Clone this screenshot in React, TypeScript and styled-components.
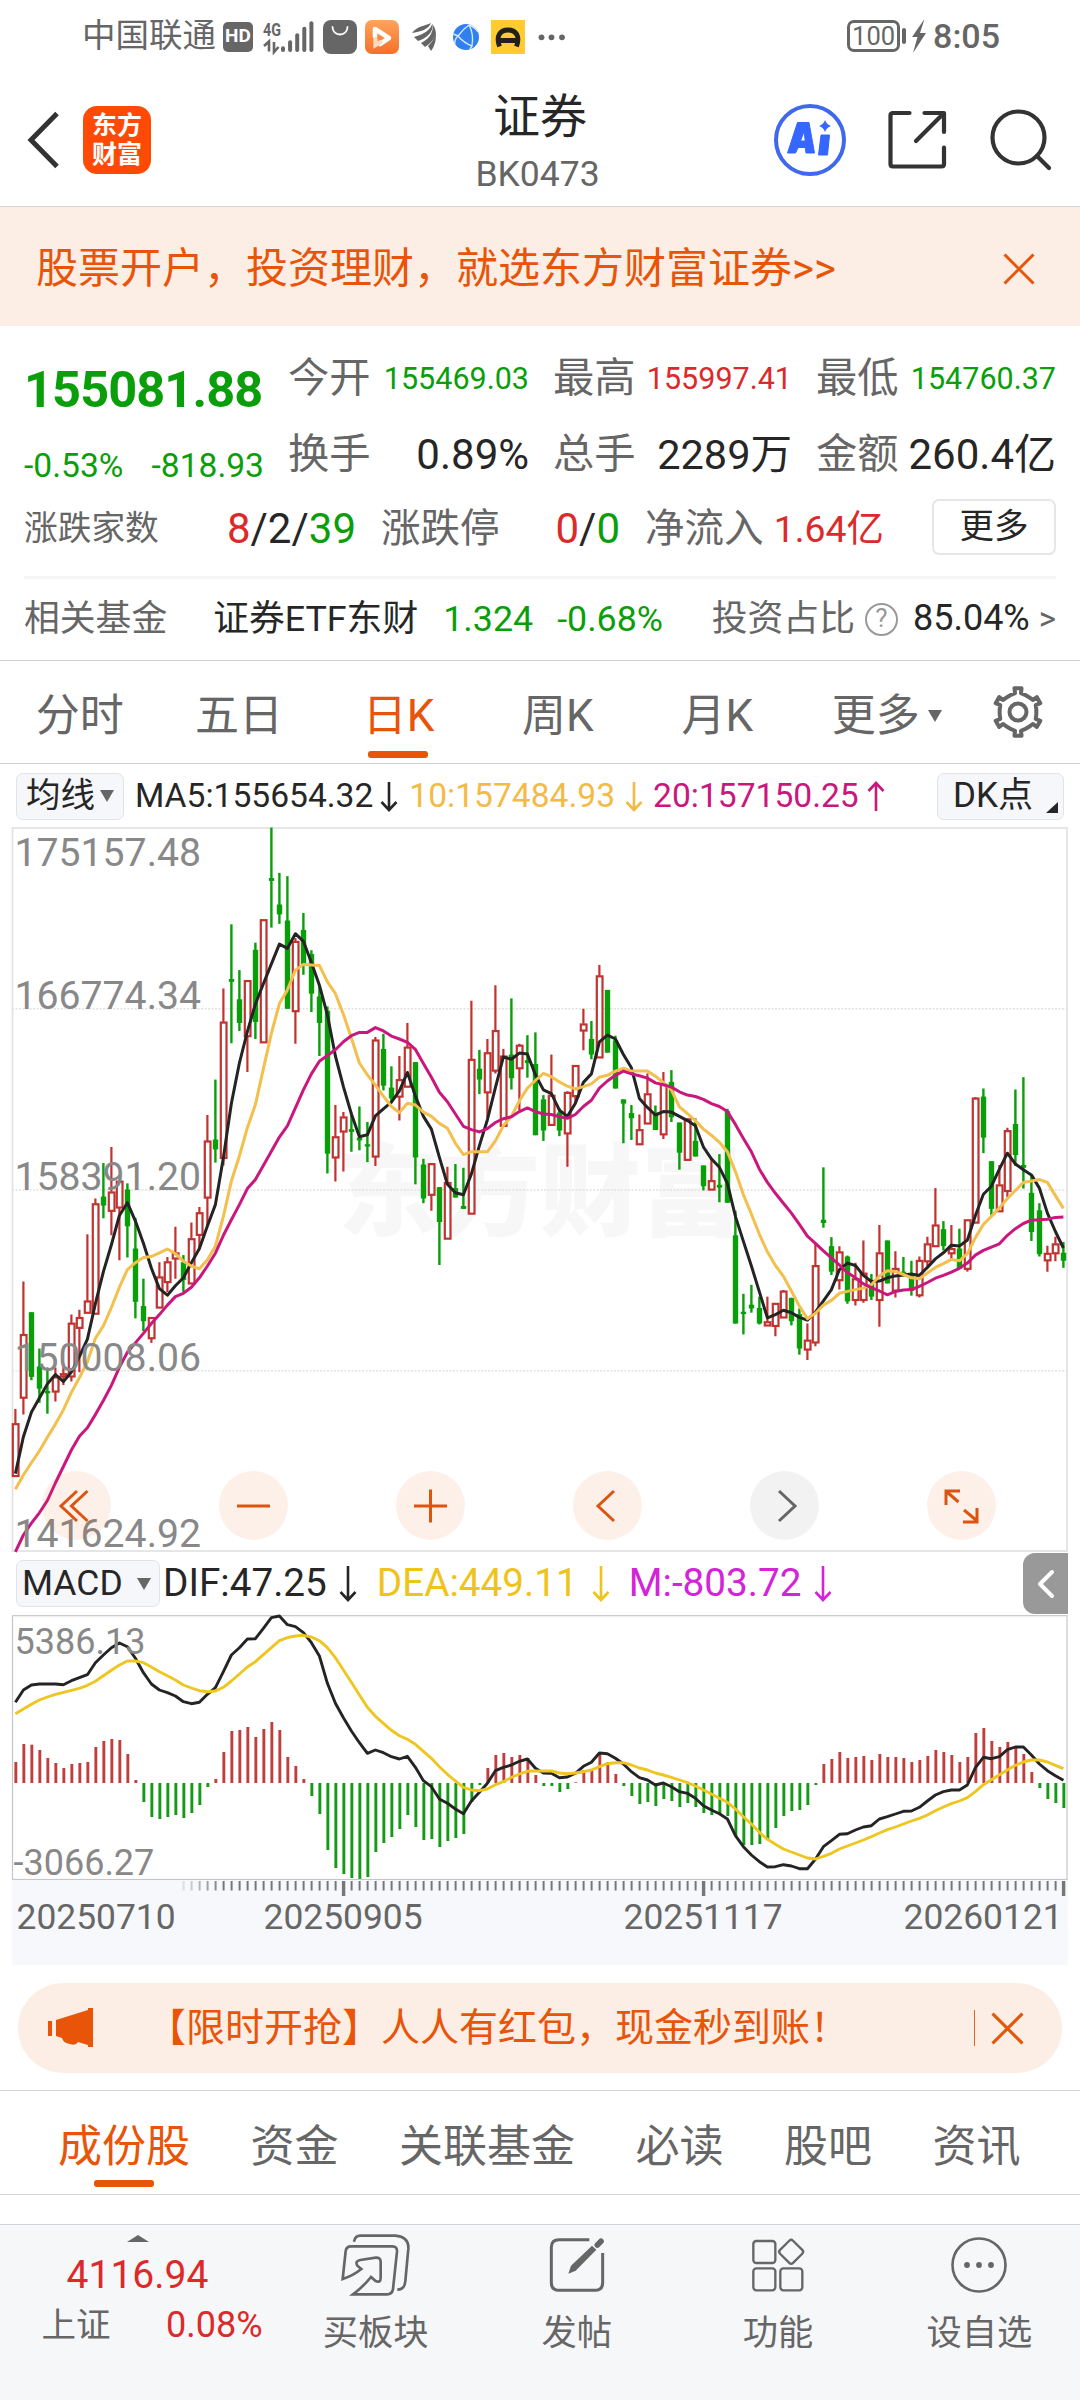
import React from 'react';
import styled, { createGlobalStyle } from 'styled-components';

const ORANGE = '#e85408';
const GREEN = '#0a9e0a';
const RED = '#dc2a2a';
const INK = '#262626';
const GREY = '#666666';

const Global = createGlobalStyle`
  * { box-sizing: border-box; }
  body { margin: 0; background: #fff; }
  svg { display: block; flex: none; overflow: visible; }
`;

const Page = styled.div`
  width: 1080px;
  height: 2400px;
  overflow: hidden;
  display: flex;
  flex-direction: column;
  background: #fff;
  font-family: Roboto, 'Noto Sans CJK SC', sans-serif;
  color: ${INK};
`;

const Text = styled.span<{ $size: number; $color?: string; $weight?: number; $ml?: number; $ls?: number }>`
  font-size: ${(p) => p.$size}px;
  line-height: 1.2;
  color: ${(p) => p.$color ?? INK};
  font-weight: ${(p) => p.$weight ?? 400};
  margin-left: ${(p) => p.$ml ?? 0}px;
  letter-spacing: ${(p) => p.$ls ?? 0}px;
  white-space: nowrap;
`;

/* ---------- status bar ---------- */
const StatusBar = styled.div`
  height: 73px;
  flex: none;
  display: flex;
  align-items: center;
  justify-content: space-between;
  padding: 0 80px 0 82px;
`;
const StatusGroup = styled.div`
  display: flex;
  align-items: center;
`;
const Battery = styled.div`
  width: 53px;
  height: 32px;
  border: 3px solid ${GREY};
  border-radius: 7px;
  display: flex;
  align-items: center;
  justify-content: center;
`;
const BatteryTip = styled.div`
  width: 4px;
  height: 16px;
  margin: 0 5px 0 2px;
  border-radius: 2px;
  background: ${GREY};
`;
const HdBadge = styled.div`
  width: 30px;
  height: 30px;
  margin: 0 6px 0 7px;
  border-radius: 5px;
  background: ${GREY};
  display: flex;
  align-items: center;
  justify-content: center;
`;

/* ---------- header ---------- */
const Header = styled.div`
  height: 134px;
  flex: none;
  display: grid;
  grid-template-columns: 300px 1fr 300px;
  border-bottom: 1px solid #d4d4d4;
`;
const HeaderLeft = styled.div`
  display: flex;
  align-items: center;
  padding-left: 25px;
`;
const Logo = styled.div`
  width: 68px;
  height: 68px;
  margin-left: 20px;
  border-radius: 14px;
  background: #ff4a05;
  display: flex;
  flex-direction: column;
  align-items: center;
  justify-content: center;
`;
const LogoLine = styled.span`
  color: #fff;
  font-size: 25px;
  line-height: 29px;
  font-weight: 700;
`;
const HeaderTitle = styled.div`
  display: flex;
  flex-direction: column;
  align-items: center;
  padding-top: 16px;
  gap: 8px;
`;
const Code = styled(Text)`
  padding-right: 5px;
`;
const HeaderRight = styled.div`
  display: flex;
  align-items: center;
  justify-content: flex-end;
  gap: 40px;
  padding-right: 27px;
`;

/* ---------- banner ---------- */
const Banner = styled.div`
  height: 119px;
  flex: none;
  display: flex;
  align-items: center;
  justify-content: space-between;
  padding: 5px 45px 0 36px;
  background: #fdeee5;
`;

/* ---------- quote ---------- */
const Quote = styled.section`
  height: 334px;
  flex: none;
  padding: 15px 24px 0;
`;
const QuoteGrid = styled.div`
  display: grid;
  grid-template-columns: 240px 241px 239px 240px;
  grid-template-rows: 76px 76px;
  column-gap: 24px;
`;
const PriceBlock = styled.div`
  grid-row: 1 / span 2;
  padding-top: 11px;
`;
const PriceLine = styled.div`
  height: 76px;
  display: flex;
  align-items: center;
`;
const ChangeLine = styled.div`
  height: 64px;
  padding-top: 12px;
  display: flex;
  align-items: center;
  justify-content: space-between;
`;
const Pair = styled.div<{ $w?: number }>`
  display: flex;
  align-items: center;
  justify-content: space-between;
  width: ${(p) => (p.$w ? `${p.$w}px` : 'auto')};
`;
const BreadthRow = styled.div`
  height: 72px;
  display: flex;
  align-items: center;
  gap: 25px;
`;
const MoreButton = styled.div`
  width: 124px;
  height: 56px;
  margin: -4px 0 0 auto;
  border: 2px solid #e6e6e6;
  border-radius: 7px;
  display: flex;
  align-items: center;
  justify-content: center;
`;
const FundRow = styled.div`
  height: 83px;
  margin-top: 11px;
  border-top: 3px solid #f5f5f5;
  display: flex;
  align-items: center;
`;
const Push = styled.div<{ $mr?: number }>`
  margin-left: auto;
  margin-right: ${(p) => p.$mr ?? 0}px;
  display: flex;
  align-items: center;
`;
const Help = styled.div`
  width: 33px;
  height: 33px;
  margin: 0 15px 0 10px;
  border: 2.5px solid #999;
  border-radius: 50%;
  display: flex;
  align-items: center;
  justify-content: center;
`;

/* ---------- period tabs ---------- */
const PeriodTabs = styled.div`
  height: 104px;
  flex: none;
  display: grid;
  grid-template-columns: repeat(6, 159.4px) 1fr;
  border-top: 1px solid #d0d0d0;
  border-bottom: 1px solid #d0d0d0;
`;
const PeriodTab = styled.div`
  display: flex;
  flex-direction: column;
  align-items: center;
  padding-top: 29px;
`;
const TabMark = styled.div<{ $on: boolean; $gap: number }>`
  width: 60px;
  height: 7px;
  margin-top: ${(p) => p.$gap}px;
  border-radius: 3px;
  background: ${(p) => (p.$on ? ORANGE : 'transparent')};
`;
const WithCaret = styled.div`
  display: flex;
  align-items: center;
  margin-left: 20px;
`;
const Caret = styled.div<{ $ml?: number }>`
  margin-left: ${(p) => p.$ml ?? 8}px;
  border-left: 7.5px solid transparent;
  border-right: 7.5px solid transparent;
  border-top: 12px solid ${GREY};
`;
const GearCell = styled.div`
  display: flex;
  align-items: center;
  padding-left: 35px;
`;

/* ---------- indicator rows ---------- */
const IndicatorRow = styled.div<{ $h: number; $pt?: number }>`
  height: ${(p) => p.$h}px;
  padding-top: ${(p) => p.$pt ?? 0}px;
  flex: none;
  display: flex;
  align-items: center;
  padding-left: 16px;
`;
const Chip = styled.div<{ $w: number; $pl: number }>`
  position: relative;
  width: ${(p) => p.$w}px;
  height: 47px;
  padding-left: ${(p) => p.$pl}px;
  border: 1.5px solid #e1e3e6;
  border-radius: 7px;
  background: #f6f7fa;
  display: flex;
  align-items: center;
`;
const Corner = styled.div`
  position: absolute;
  right: 5px;
  bottom: 6px;
  border-left: 12px solid transparent;
  border-bottom: 11px solid ${INK};
`;
const Drawer = styled.div`
  width: 45px;
  height: 61px;
  margin-left: auto;
  margin-right: 12px;
  border-radius: 12px 0 0 12px;
  background: #999;
  display: flex;
  align-items: center;
  justify-content: center;
`;

/* ---------- charts ---------- */
const ChartArea = styled.div`
  position: relative;
  height: 725px;
  flex: none;
`;
const ChartTools = styled.div`
  position: absolute;
  left: 42px;
  top: 644px;
  display: flex;
  gap: 108px;
`;
const Tool = styled.div<{ $muted?: boolean }>`
  width: 69px;
  height: 69px;
  border-radius: 50%;
  background: ${(p) => (p.$muted ? 'rgba(0,0,0,0.05)' : 'rgba(234,85,4,0.085)')};
  display: flex;
  align-items: center;
  justify-content: center;
`;
const MacdArea = styled.div`
  height: 265px;
  flex: none;
`;
const AxisArea = styled.div`
  height: 85px;
  margin: 0 12px;
  flex: none;
  background: #f7f8fb;
`;

/* ---------- promo ---------- */
const Promo = styled.div`
  height: 90px;
  margin: 18px 18px 17px;
  flex: none;
  border-radius: 45px;
  background: #fdeee5;
  display: flex;
  align-items: center;
  padding: 0 38px 0 30px;
`;
const PromoLine = styled.div`
  width: 1px;
  height: 36px;
  margin-left: auto;
  margin-right: 16px;
  background: #d9672b;
`;

/* ---------- content tabs ---------- */
const ContentTabs = styled.div`
  height: 105px;
  flex: none;
  display: flex;
  gap: 60.5px;
  padding-left: 58px;
  border-top: 1px solid #d4d4d4;
  border-bottom: 1px solid #d4d4d4;
`;
const ContentTab = styled.div`
  display: flex;
  flex-direction: column;
  align-items: center;
  padding-top: 30px;
`;

/* ---------- bottom bar ---------- */
const BottomBar = styled.div`
  height: 176px;
  margin-top: 29px;
  flex: none;
  display: grid;
  grid-template-columns: 275px repeat(4, 201.25px);
  border-top: 1px solid #cfd2d8;
  background: #f6f7f9;
`;
const IndexBox = styled.div`
  display: flex;
  flex-direction: column;
  align-items: center;
  padding-top: 10px;
`;
const UpCaret = styled.div`
  margin-bottom: 10px;
  border-left: 11px solid transparent;
  border-right: 11px solid transparent;
  border-bottom: 7px solid ${GREY};
`;
const IndexLine = styled.div`
  width: 221px;
  margin: 5px 0 0 29px;
  display: flex;
  align-items: center;
  justify-content: space-between;
`;
const NavItem = styled.div`
  display: flex;
  flex-direction: column;
  align-items: center;
`;
const NavIcon = styled.div`
  height: 80px;
  margin-bottom: 7px;
  display: flex;
  align-items: center;
`;

/* ---------- data ---------- */
type Candle = [0 | 1, number, number, number, number];

/* [rising, high, body top, body bottom, low] in axis units measured down from the top */
const CANDLES: Candle[] = [
  [1,1248,1279,1391,1391],[1,978,1090,1225,1260],[0,1043,1043,1180,1187],[0,1120,1158,1205,1235],[0,1160,1210,1215,1258],
  [1,1160,1180,1212,1232],[1,1155,1173,1180,1197],[1,1048,1066,1180,1190],[1,1038,1054,1077,1170],[1,878,1019,1045,1045],
  [1,802,813,1047,1047],[0,727,798,817,844],[1,693,788,829,880],[1,762,765,822,933],[0,770,783,861,927],
  [0,843,908,1021,1056],[0,972,1030,1062,1083],[1,1054,1054,1099,1108],[1,937,968,1034,1034],[1,926,936,980,1000],
  [1,862,917,930,972],[0,922,937,975,1000],[1,853,887,983,983],[1,820,832,880,910],[1,625,680,801,860],
  [0,550,677,698,726],[1,357,428,717,732],[0,221,337,343,473],[0,318,380,430,447],[1,340,340,459,534],
  [0,260,275,428,464],[1,211,211,472,472],[0,16,123,129,228],[0,112,179,200,220],[0,119,213,400,400],
  [1,250,257,406,474],[0,197,233,305,328],[0,276,284,368,407],[0,350,374,430,500],[0,395,404,707,749],
  [1,604,671,716,766],[1,619,629,661,745],[0,620,655,661,703],[0,607,673,679,700],[0,640,687,692,725],
  [1,460,466,714,733],[0,453,485,563,573],[0,522,567,590,600],[1,500,550,587,637],[1,430,481,566,566],
  [0,513,513,715,772],[0,718,730,802,812],[1,728,728,795,828],[0,778,778,852,943],[1,735,768,888,888],
  [0,729,780,800,800],[0,737,818,824,824],[1,383,507,835,835],[0,487,527,550,581],[1,464,493,578,630],
  [1,350,446,532,537],[1,485,500,649,649],[0,378,497,547,571],[1,474,477,527,615],[0,456,509,515,546],
  [0,450,517,668,668],[0,583,592,658,680],[1,497,583,647,647],[0,610,620,658,670],[1,575,577,665,735],
  [1,520,520,586,600],[1,400,432,447,488],[0,426,464,497,507],[1,307,330,504,504],[0,360,360,493,493],
  [0,457,467,569,569],[0,592,592,601,685],[0,604,621,632,678],[1,624,656,688,688],[1,537,580,644,644],
  [0,605,620,657,657],[1,534,560,667,676],[0,530,555,630,640],[0,641,641,705,741],[1,633,633,721,721],
  [0,632,680,713,713],[0,732,732,776,785],[1,717,764,784,784],[0,708,773,779,810],[0,612,617,811,811],
  [0,828,880,1067,1067],[0,1004,1042,1047,1090],[0,985,1027,1035,1044],[0,1010,1034,1067,1069],[1,1010,1063,1072,1072],
  [1,1024,1024,1073,1094],[1,996,998,1055,1055],[0,1012,1013,1062,1071],[0,1035,1047,1120,1133],[1,1067,1102,1123,1144],
  [1,897,944,1108,1115],[0,736,847,854,864],[0,884,903,957,964],[1,903,915,976,995],[0,923,925,1020,1025],
  [1,938,972,1018,1029],[1,891,960,1018,1023],[0,962,983,1010,1017],[1,858,917,1018,1074],[0,891,891,982,982],
  [1,914,950,998,1012],[0,926,957,962,967],[0,934,965,998,1008],[1,925,933,1008,1012],[1,883,898,936,945],
  [1,780,858,904,904],[0,850,867,903,912],[1,858,908,919,930],[0,866,908,950,950],[1,847,847,952,957],
  [1,587,589,854,854],[0,569,586,673,706],[0,723,723,824,840],[1,731,773,830,830],[1,652,658,787,800],
  [0,571,644,710,733],[0,545,731,737,781],[0,752,790,873,892],[0,812,827,920,925],[1,902,918,934,957],
  [1,883,898,919,935],[0,894,917,934,949],
];

const MA5 = [1385,1307,1255,1225,1195,1175,1190,1170,1137,1100,1025,957,900,838,811,850,897,950,993,1007,987,970,938,908,860,815,715,600,515,448,390,347,305,263,272,241,257,302,350,413,500,565,623,671,667,627,612,598,574,535,585,628,655,715,772,790,794,750,690,635,567,502,507,494,496,540,572,580,615,628,600,556,538,470,456,464,497,525,590,609,625,618,619,628,637,648,693,718,736,770,840,893,945,1000,1055,1048,1039,1044,1054,1060,1043,1019,995,953,939,944,965,978,977,970,966,964,962,965,948,930,917,901,903,890,838,793,776,740,706,729,741,752,780,833,872,907];
const MA10 = [1418,1388,1362,1337,1308,1280,1250,1213,1182,1148,1098,1072,1033,990,953,938,927,925,917,909,919,935,945,951,932,903,840,765,712,652,603,527,452,389,360,318,306,307,308,343,368,412,462,515,540,562,585,607,620,600,604,619,628,643,653,685,709,703,703,703,680,648,628,595,568,552,537,544,555,564,570,565,559,545,541,532,526,532,532,532,543,556,572,608,622,637,655,668,683,703,745,794,835,878,915,944,967,998,1030,1057,1045,1028,1018,1003,999,995,992,985,966,955,957,963,970,972,960,948,940,931,934,919,885,857,840,822,802,785,768,765,762,768,796,823];
const MA20 = [1551,1515,1490,1468,1442,1405,1370,1335,1306,1288,1260,1230,1198,1160,1128,1108,1088,1067,1048,1028,1010,1003,990,970,945,918,880,847,815,781,762,732,702,672,648,610,572,538,511,499,487,470,457,450,450,440,447,458,464,471,486,516,545,577,597,623,649,656,661,654,641,633,629,618,610,618,623,624,629,632,624,607,594,568,553,541,532,538,542,547,557,561,566,576,583,586,592,601,607,618,645,675,703,740,768,791,812,833,857,882,897,913,928,943,959,970,983,991,998,1006,999,996,995,988,980,971,965,958,950,939,922,912,905,898,880,866,855,848,847,846,842,841];

const BARS = [666,612,614,630,654,669,684,672,669,666,621,603,597,600,642,720,786,831,837,831,825,834,819,795,741,717,636,573,570,561,591,567,546,570,651,678,717,768,822,930,984,1002,1014,1017,1011,936,909,891,867,825,861,900,897,921,903,894,882,786,735,684,645,639,651,645,654,705,738,738,756,747,727,690,687,642,666,702,738,768,792,786,798,777,783,801,789,801,819,825,822,828,888,915,915,912,897,864,828,813,810,795,735,672,657,636,654,651,648,660,642,651,651,654,666,660,648,630,636,645,666,651,579,564,603,621,606,618,642,696,744,777,789,804];
const DIF = [487,450,435,432,432,432,434,422,413,404,368,345,323,309,320,355,398,432,450,458,468,485,491,487,463,443,395,345,323,297,296,265,233,228,254,260,278,308,348,430,490,533,573,608,640,630,638,650,657,649,682,722,740,777,790,807,821,783,757,730,692,682,675,664,657,685,699,700,713,711,700,679,667,639,641,655,672,695,713,720,735,729,740,755,760,775,797,810,821,837,887,920,945,965,981,980,974,978,986,986,958,920,902,883,881,870,861,857,837,830,822,814,813,802,783,765,755,750,750,735,683,652,656,650,629,621,621,645,672,692,707,721];
const DEA = [521,507,493,480,471,463,457,451,445,436,424,407,391,375,363,363,368,381,395,407,420,435,444,452,455,453,442,423,402,381,365,344,323,302,293,288,286,291,302,323,353,390,427,465,502,529,550,571,587,598,613,634,655,680,703,723,742,750,752,747,734,725,712,702,694,693,693,693,699,701,699,695,690,680,671,668,668,675,684,690,699,705,712,720,728,738,750,762,775,787,807,830,852,877,898,913,927,936,945,954,957,949,940,927,918,909,900,890,879,869,861,852,843,835,825,812,801,791,783,773,755,734,719,704,690,676,666,660,660,666,676,686];

const slotX = (i: number) => 15.4 + i * 8;
const priceY = (v: number) => v / 2.119 - 7;
const macdY = (v: number) => v / 3 - 75;
const line = (values: number[], y: (v: number) => number) =>
  values.map((v, i) => `${slotX(i).toFixed(1)},${y(v).toFixed(1)}`).join(' ');

const PRICE_LABELS: [string, number][] = [
  ['175157.48', 38.5], ['166774.34', 182], ['158391.20', 362.5], ['150008.06', 543.7], ['141624.92', 720],
];

const PriceChart = () => (
  <svg width="1080" height="725" viewBox="0 0 1080 725">
    <text x="338" y="401" fontSize="101" fontWeight="900" fill="#f7f7f7" fontFamily="'Noto Sans CJK SC', sans-serif">东方财富</text>
    {[181.8, 363, 543.8].map((y) => (
      <line key={y} x1="12" x2="1067" y1={y} y2={y} stroke="#e2e2e2" strokeWidth="1.5" strokeDasharray="2 1.5" />
    ))}
    <rect x="12.5" y="1" width="1054.5" height="723" fill="none" stroke="#e2e2e2" strokeWidth="1.7" />
    {CANDLES.map(([up, hi, top, bottom, lo], i) => {
      const x = slotX(i);
      const t = priceY(top);
      const b = priceY(bottom);
      return up ? (
        <g key={i} fill="none" stroke="#c03331" strokeWidth="2.2">
          <path d={`M${x} ${priceY(hi)}V${t}M${x} ${b}V${priceY(lo)}`} />
          <rect x={x - 2.6} y={t + 0.6} width="5.7" height={Math.max(b - t - 1, 2)} fill="#fff" />
        </g>
      ) : (
        <g key={i} fill="#0a9e0a">
          <rect x={x - 1.2} y={priceY(hi)} width="2.4" height={priceY(lo) - priceY(hi)} />
          <rect x={x - 2.6} y={t} width="5.4" height={b - t} />
        </g>
      );
    })}
    <g fill="none" strokeWidth="3" strokeLinejoin="round">
      <polyline points={line(MA5, priceY)} stroke="#242424" />
      <polyline points={line(MA10, priceY)} stroke="#f3bf4d" />
      <polyline points={line(MA20, priceY)} stroke="#c9177e" />
    </g>
    <g fontSize="39.2" fill="#888">
      {PRICE_LABELS.map(([label, y]) => <text key={label} x="14.5" y={y}>{label}</text>)}
    </g>
  </svg>
);

const MacdChart = () => (
  <svg width="1080" height="265" viewBox="0 0 1080 265">
    {BARS.map((v, i) => {
      const y = macdY(v);
      return (
        <rect key={i} x={slotX(i) - 1} width="2.9" y={Math.min(y, 168)} height={Math.abs(168 - y)} fill={v < 729 ? '#c03f3d' : '#149a14'} />
      );
    })}
    <rect x="12.5" y="0.7" width="1054.5" height="263.800" fill="none" stroke="#c6c6c6" strokeWidth="1.2" />
    <g fill="none" strokeWidth="2.9" strokeLinejoin="round">
      <polyline points={line(DIF, macdY)} stroke="#242424" />
      <polyline points={line(DEA, macdY)} stroke="#efc51f" />
    </g>
    <g fontSize="36" fill="#888">
      <text x="14.500" y="39">5386.13</text>
      <text x="13.500" y="259.500">-3066.27</text>
    </g>
  </svg>
);

const TimeAxis = () => (
  <svg width="1056" height="85" viewBox="12 0 1056 85">
    {BARS.map((_, i) => {
      if (i < 21) return null;
      const major = (i - 41) % 45 === 0;
      return (
        <rect
          key={i}
          x={slotX(i) - (major ? 1.5 : 0.8)}
          y="1"
          width={major ? 3.4 : 2}
          height={major ? 15 : 9.5}
          fill="#777"
          opacity={Math.min(1, 0.2 + (i - 21) * 0.16)}
        />
      );
    })}
    <g fontSize="35.4" fill={GREY}>
      <text x="16.5" y="49">20250710</text>
      <text x="263.500" y="49">20250905</text>
      <text x="623.500" y="49">20251117</text>
      <text x="903.500" y="49">20260121</text>
    </g>
  </svg>
);

/* ---------- icons ---------- */
const ArrowSvg = styled.svg<{ $ml: number; $mr: number }>`
  margin-left: ${(p) => p.$ml}px;
  margin-right: ${(p) => p.$mr}px;
`;

const Arrow = ({ color, h, up, ml, mr }: { color: string; h: number; up?: boolean; ml: number; mr: number }) => (
  <ArrowSvg $ml={ml} $mr={mr} width="18" height={h} viewBox={`0 0 18 ${h}`} fill="none" stroke={color} strokeWidth="2.600">
    <path d={up ? `M9 ${h - 1}V3M1.5 10L9 2L16.5 10` : `M9 1V${h - 3}M1.5 ${h - 10}L9 ${h - 2}L16.5 ${h - 10}`} />
  </ArrowSvg>
);

const Cross = ({ size, color }: { size: number; color: string }) => (
  <svg width={size} height={size} viewBox="0 0 32 32" fill="none" stroke={color} strokeWidth="3">
    <path d="M1.5 1.5L30.5 30.5M30.5 1.5L1.5 30.5" />
  </svg>
);

const StatusIcons = () => (
  <svg width="312" height="40" viewBox="258 16 312 40">
    <text x="262" y="34.500" fontSize="19" fontWeight="700" fill={GREY} textLength="18" lengthAdjust="spacingAndGlyphs">4G</text>
    <path d="M263 45l5-4.5v10M273 41v10l4.5-5" fill="none" stroke={GREY} strokeWidth="2.6" />
    {[45.3, 39.3, 32.3, 25.7, 20.3].map((y, i) => (
      <rect key={y} x={280 + i * 7.1} y={y} width="4" height={51 - y} rx="2" fill={GREY} />
    ))}
    <rect x="322" y="19" width="34" height="34" rx="8" fill={GREY} />
    <path d="M331.500 26a7.500 7.500 0 0 0 15 0" fill="none" stroke="#fff" strokeWidth="1.8" strokeLinecap="round" />
    <defs>
      <linearGradient id="play" x1="0" y1="0" x2="0" y2="1">
        <stop offset="0" stopColor="#ffa45c" />
        <stop offset="1" stopColor="#f5702a" />
      </linearGradient>
    </defs>
    <rect x="364" y="19" width="34" height="34" rx="7" fill="url(#play)" />
    <path d="M374 35.500V28l14 9-9 6" fill="none" stroke="#fff" strokeWidth="4.600" strokeLinejoin="round" strokeLinecap="round" />
    <path d="M374.500 38v6l5-3" fill="none" stroke="#ffd9c0" strokeWidth="4.200" strokeLinecap="round" />
    <g fill={GREY}>
      <path d="M411 32C416 25 424 25 430 22C428 28 419 31 411 32Z" />
      <path d="M413 36C424 33 429 29 431.500 22.500C433 32 424 38 417 40Z" />
      <path d="M420 42C430 37 432 30 432 24C438 32 433 40 424 46Z" />
      <path d="M427 45C433 40 434 34 434.300 29C436 37 434 45 430 50Z" />
    </g>
    <circle cx="465" cy="36" r="13" fill="#3180f0" />
    <g fill="none" stroke="#d6e7ff" strokeWidth="1.400">
      <path d="M468 24Q462 28 457 35Q463 42 471 45Q473 33 468 24M457 35L452.500 33M457 35Q453 39 454 43M471 45L469 48M468 24Q474 26 477 31" />
    </g>
    <rect x="490" y="19" width="34" height="34" fill="#ffcb30" />
    <path d="M498.500 45.500c-4-11 1-16.500 8.500-16.500s12.500 5.500 8.500 16.500M499 39.500h16" fill="none" stroke="#221f1c" strokeWidth="4.800" />
    {[540.5, 550.5, 561].map((x) => <circle key={x} cx={x} cy="36.300" r="2.900" fill={GREY} />)}
  </svg>
);

const gearPath = () => {
  const pts: string[] = [];
  for (let k = 0; k < 6; k += 1) {
    const base = k * 60 - 90;
    ([[-22, 18.5], [-9, 19], [-8.5, 24], [8.500, 24], [9, 19], [22, 18.5]] as [number, number][]).forEach(([a, r]) => {
      const t = ((base + a) * Math.PI) / 180;
      pts.push(`${(27 + r * Math.cos(t)).toFixed(2)} ${(27 + r * Math.sin(t)).toFixed(2)}`);
    });
  }
  return `M${pts.join('L')}Z`;
};

const Gear = () => (
  <svg width="54" height="54" viewBox="0 0 54 54" fill="none" stroke={GREY} strokeWidth="4" strokeLinejoin="round">
    <path d={gearPath()} />
    <circle cx="27" cy="27" r="8.500" />
  </svg>
);

const AiIcon = () => (
  <svg width="74" height="74" viewBox="0 0 74 74">
    <circle cx="37" cy="37" r="34" fill="none" stroke="#3f68ec" strokeWidth="4" />
    <path d="M24.500 19.500h11.500l5.500 30.500h-8.500l-.8-5.500h-7l-2.700 5.500h-8Z M31 28.500L27.500 38h4.800Z" fill="#3566ff" fillRule="evenodd" stroke="#3566ff" strokeWidth="1" strokeLinejoin="round" />
    <path d="M48 32h8.500l-2 20h-9Z" fill="#3566ff" stroke="#3566ff" strokeWidth="1" strokeLinejoin="round" />
    <path d="M52 17Q53.500 21.500 58 23Q53.500 24.500 52 29Q50.500 24.500 46 23Q50.500 21.500 52 17Z" fill="#3566ff" />
  </svg>
);

const ShareIcon = () => (
  <svg width="62" height="62" viewBox="0 0 62 62" fill="none" stroke="#333" strokeWidth="4.200" strokeLinecap="round" strokeLinejoin="round">
    <path d="M22.500 4H6Q3.500 4 3.500 6.500V55Q3.500 57.500 6 57.500H54.500Q57 57.500 57 55V38.500M37.500 4H57V23M56 5L29 32" />
  </svg>
);

const SearchIcon = () => (
  <svg width="64" height="64" viewBox="0 0 64 64" fill="none" stroke="#333" strokeWidth="4.200" strokeLinecap="round">
    <circle cx="29.500" cy="29.500" r="26" />
    <path d="M48 48L60 60" />
  </svg>
);

const Megaphone = () => (
  <svg width="46" height="40" viewBox="0 0 46 40" fill={ORANGE}>
    <path d="M0 13h4v15H0ZM8 12L40 2V0h5v39h-5V37L30 34q-2 4-8 2-7-1-8-6L8 28Z" />
  </svg>
);

const BuyIcon = () => (
  <svg width="75" height="66.700" viewBox="83 65 225 200" fill="none" stroke={GREY} strokeWidth="8" strokeLinejoin="round">
    <path d="M131 94Q134 76 150 76H255Q296 80 294 115L285 212Q283 238 261 238" />
    <path strokeLinejoin="miter" d="M97 206L106 122Q108 108 122 108H246Q261 108 260 124L248 236Q246 252 230 252H128Q160 228 182 200L196 212Q211 219 211 202V155Q211 141 196 142L150 149Q133 152 141 166L153 176Q130 195 97 206Z" />
  </svg>
);

const PostIcon = () => (
  <svg width="56" height="56" viewBox="717 78 168 168" fill="none" stroke={GREY} strokeWidth="9">
    <path d="M838 86H747Q724 86 724 109V215Q724 238 747 238H855Q878 238 878 215V126" />
    <path d="M775 188L783 164L846 104L859 116L797 179Z" fill={GREY} stroke="none" />
    <path d="M862 102L873 91" strokeWidth="17" strokeLinecap="round" />
  </svg>
);

const GridIcon = () => (
  <svg width="54" height="54" viewBox="1324 80 162 162" fill="none" stroke={GREY} strokeWidth="7">
    <rect x="1331" y="89" width="66" height="66" rx="9" />
    <rect x="1331" y="171" width="66" height="66" rx="9" />
    <rect x="1412" y="171" width="66" height="66" rx="9" />
    <rect x="1417" y="94" width="55" height="55" rx="8" transform="rotate(45 1444.500 121.500)" />
  </svg>
);

const DotsIcon = () => (
  <svg width="58" height="58" viewBox="0 0 58 58">
    <circle cx="29" cy="29" r="26.500" fill="none" stroke={GREY} strokeWidth="2.600" />
    {[17, 29, 41].map((x) => <circle key={x} cx={x} cy="29" r="2.900" fill={GREY} />)}
  </svg>
);

/* ---------- page ---------- */
const STATS: [string, string, string, number][] = [
  ['今开', '155469.03', GREEN, 30.5],
  ['最高', '155997.41', RED, 30.5],
  ['最低', '154760.37', GREEN, 30.5],
  ['换手', '0.89%', INK, 42],
  ['总手', '2289万', INK, 41.5],
  ['金额', '260.4亿', INK, 42],
];
const PERIODS = ['分时', '五日', '日K', '周K', '月K'];
const SECTIONS = ['成份股', '资金', '关联基金', '必读', '股吧', '资讯'];
const NAV: [string, React.ReactNode][] = [
  ['买板块', <BuyIcon />],
  ['发帖', <PostIcon />],
  ['功能', <GridIcon />],
  ['设自选', <DotsIcon />],
];
const TOOLS: { d: string; muted?: boolean }[] = [
  { d: 'M19 3L3 18L19 33M29.500 3L13.500 18L29.500 33' },
  { d: 'M2 18H35' },
  { d: 'M2 18H35M18.500 1.500V34.500' },
  { d: 'M25 3L9 18L25 33' },
  { d: 'M13 3L29 18L13 33', muted: true },
  { d: 'M17 3H3V17M4 4L15.500 14M21 22L33 32M34 20V34H20' },
];

export default function App() {
  return (
    <Page>
      <Global />
      <StatusBar>
        <StatusGroup>
          <Text $size={33.5} $color={GREY}>中国联通</Text>
          <HdBadge><Text $size={19} $color="#fff" $weight={700}>HD</Text></HdBadge>
          <StatusIcons />
        </StatusGroup>
        <StatusGroup>
          <Battery><Text $size={25.5} $color={GREY}>100</Text></Battery>
          <BatteryTip />
          <svg width="16" height="36" viewBox="0 0 16 36" fill={GREY}>
            <path d="M13.500 1L1 19H6.500L2 35L15 15H9Z" />
          </svg>
          <Text $size={34} $color={GREY} $weight={500} $ml={6}>8:05</Text>
        </StatusGroup>
      </StatusBar>

      <Header>
        <HeaderLeft>
          <svg width="38" height="58" viewBox="0 0 38 58" fill="none" stroke="#333" strokeWidth="5">
            <path d="M32 2.500L6 29L32 55.500" />
          </svg>
          <Logo><LogoLine>东方</LogoLine><LogoLine>财富</LogoLine></Logo>
        </HeaderLeft>
        <HeaderTitle>
          <Text $size={47}>证券</Text>
          <Code $size={35.5} $color={GREY}>BK0473</Code>
        </HeaderTitle>
        <HeaderRight>
          <AiIcon />
          <ShareIcon />
          <SearchIcon />
        </HeaderRight>
      </Header>

      <Banner>
        <Text $size={42} $color={ORANGE}>股票开户，投资理财，就选东方财富证券&gt;&gt;</Text>
        <Cross size={32} color={ORANGE} />
      </Banner>

      <Quote>
        <QuoteGrid>
          <PriceBlock>
            <PriceLine><Text $size={50.5} $color={GREEN} $weight={700} $ls={-0.9}>155081.88</Text></PriceLine>
            <ChangeLine>
              <Text $size={33.6} $color={GREEN}>-0.53%</Text>
              <Text $size={33.6} $color={GREEN}>-818.93</Text>
            </ChangeLine>
          </PriceBlock>
          {STATS.map(([label, value, color, size]) => (
            <Pair key={label}>
              <Text $size={41.3} $color={GREY}>{label}</Text>
              <Text $size={size} $color={color}>{value}</Text>
            </Pair>
          ))}
        </QuoteGrid>
        <BreadthRow>
          <Pair $w={332}>
            <Text $size={33.7} $color={GREY}>涨跌家数</Text>
            <Text $size={42}>
              <Text $size={42} $color={RED}>8</Text>/2/<Text $size={42} $color={GREEN}>39</Text>
            </Text>
          </Pair>
          <Pair $w={239}>
            <Text $size={39.5} $color={GREY}>涨跌停</Text>
            <Text $size={42}>
              <Text $size={42} $color={RED}>0</Text>/<Text $size={42} $color={GREEN}>0</Text>
            </Text>
          </Pair>
          <Pair $w={239}>
            <Text $size={39.5} $color={GREY}>净流入</Text>
            <Text $size={37.4} $color={RED}>1.64亿</Text>
          </Pair>
          <MoreButton><Text $size={34.5}>更多</Text></MoreButton>
        </BreadthRow>
        <FundRow>
          <Text $size={35.8} $color={GREY}>相关基金</Text>
          <Text $size={35.8} $ml={46}>证券ETF东财</Text>
          <Text $size={35.8} $color={GREEN} $ml={25}>1.324</Text>
          <Text $size={35.8} $color={GREEN} $ml={24}>-0.68%</Text>
          <Push>
            <Text $size={35.8} $color={GREY}>投资占比</Text>
            <Help><Text $size={26} $color="#999">?</Text></Help>
            <Text $size={36}>85.04%</Text>
            <Text $size={33} $color={GREY} $ml={9}>&gt;</Text>
          </Push>
        </FundRow>
      </Quote>

      <PeriodTabs>
        {PERIODS.map((name, i) => (
          <PeriodTab key={name}>
            <Text $size={44} $color={i === 2 ? ORANGE : GREY}>{name}</Text>
            <TabMark $on={i === 2} $gap={8} />
          </PeriodTab>
        ))}
        <PeriodTab>
          <WithCaret><Text $size={44} $color={GREY}>更多</Text><Caret /></WithCaret>
        </PeriodTab>
        <GearCell><Gear /></GearCell>
      </PeriodTabs>

      <IndicatorRow $h={63} $pt={1}>
        <Chip $w={108} $pl={9}><Text $size={34.5}>均线</Text><Caret $ml={5} /></Chip>
        <Text $size={33.6} $ml={11}>MA5:155654.32</Text>
        <Arrow color={INK} h={31} ml={7} mr={11} />
        <Text $size={33.6} $color="#f3bb45">10:157484.93</Text>
        <Arrow color="#f3bb45" h={31} ml={10} mr={10} />
        <Text $size={33.6} $color="#c9177e">20:157150.25</Text>
        <Arrow color="#c9177e" h={31} up ml={8} mr={0} />
        <Push $mr={16}>
          <Chip $w={127} $pl={15}><Text $size={35}>DK点</Text><Corner /></Chip>
        </Push>
      </IndicatorRow>

      <ChartArea>
        <PriceChart />
        <ChartTools>
          {TOOLS.map(({ d, muted }) => (
            <Tool key={d} $muted={muted}>
              <svg width="37" height="36" viewBox="0 0 37 36" fill="none" stroke={muted ? GREY : '#dc5510'} strokeWidth="3">
                <path d={d} />
              </svg>
            </Tool>
          ))}
        </ChartTools>
      </ChartArea>

      <IndicatorRow $h={63}>
        <Chip $w={144} $pl={5}><Text $size={35.5}>MACD</Text><Caret $ml={14} /></Chip>
        <Text $size={38.7} $ml={3}>DIF:47.25</Text>
        <Arrow color={INK} h={37} ml={12} mr={20} />
        <Text $size={38.7} $color="#efc319">DEA:449.11</Text>
        <Arrow color="#efc319" h={37} ml={14} mr={19} />
        <Text $size={38.7} $color="#d423d9">M:-803.72</Text>
        <Arrow color="#d423d9" h={37} ml={12} mr={0} />
        <Drawer>
          <svg width="18" height="30" viewBox="0 0 18 30" fill="none" stroke="#fff" strokeWidth="4" strokeLinecap="round" strokeLinejoin="round">
            <path d="M15 3L3 15L15 27" />
          </svg>
        </Drawer>
      </IndicatorRow>

      <MacdArea><MacdChart /></MacdArea>
      <AxisArea><TimeAxis /></AxisArea>

      <Promo>
        <Megaphone />
        <Text $size={39} $color={ORANGE} $ml={53}>【限时开抢】人人有红包，现金秒到账！</Text>
        <PromoLine />
        <Cross size={33} color={ORANGE} />
      </Promo>

      <ContentTabs>
        {SECTIONS.map((name, i) => (
          <ContentTab key={name}>
            <Text $size={44} $color={i === 0 ? ORANGE : GREY}>{name}</Text>
            <TabMark $on={i === 0} $gap={6} />
          </ContentTab>
        ))}
      </ContentTabs>

      <BottomBar>
        <IndexBox>
          <UpCaret />
          <Text $size={39} $color={RED}>4116.94</Text>
          <IndexLine>
            <Text $size={34.5} $color={GREY}>上证</Text>
            <Text $size={36} $color={RED}>0.08%</Text>
          </IndexLine>
        </IndexBox>
        {NAV.map(([name, icon]) => (
          <NavItem key={name}>
            <NavIcon>{icon}</NavIcon>
            <Text $size={35.3} $color={GREY}>{name}</Text>
          </NavItem>
        ))}
      </BottomBar>
    </Page>
  );
}
